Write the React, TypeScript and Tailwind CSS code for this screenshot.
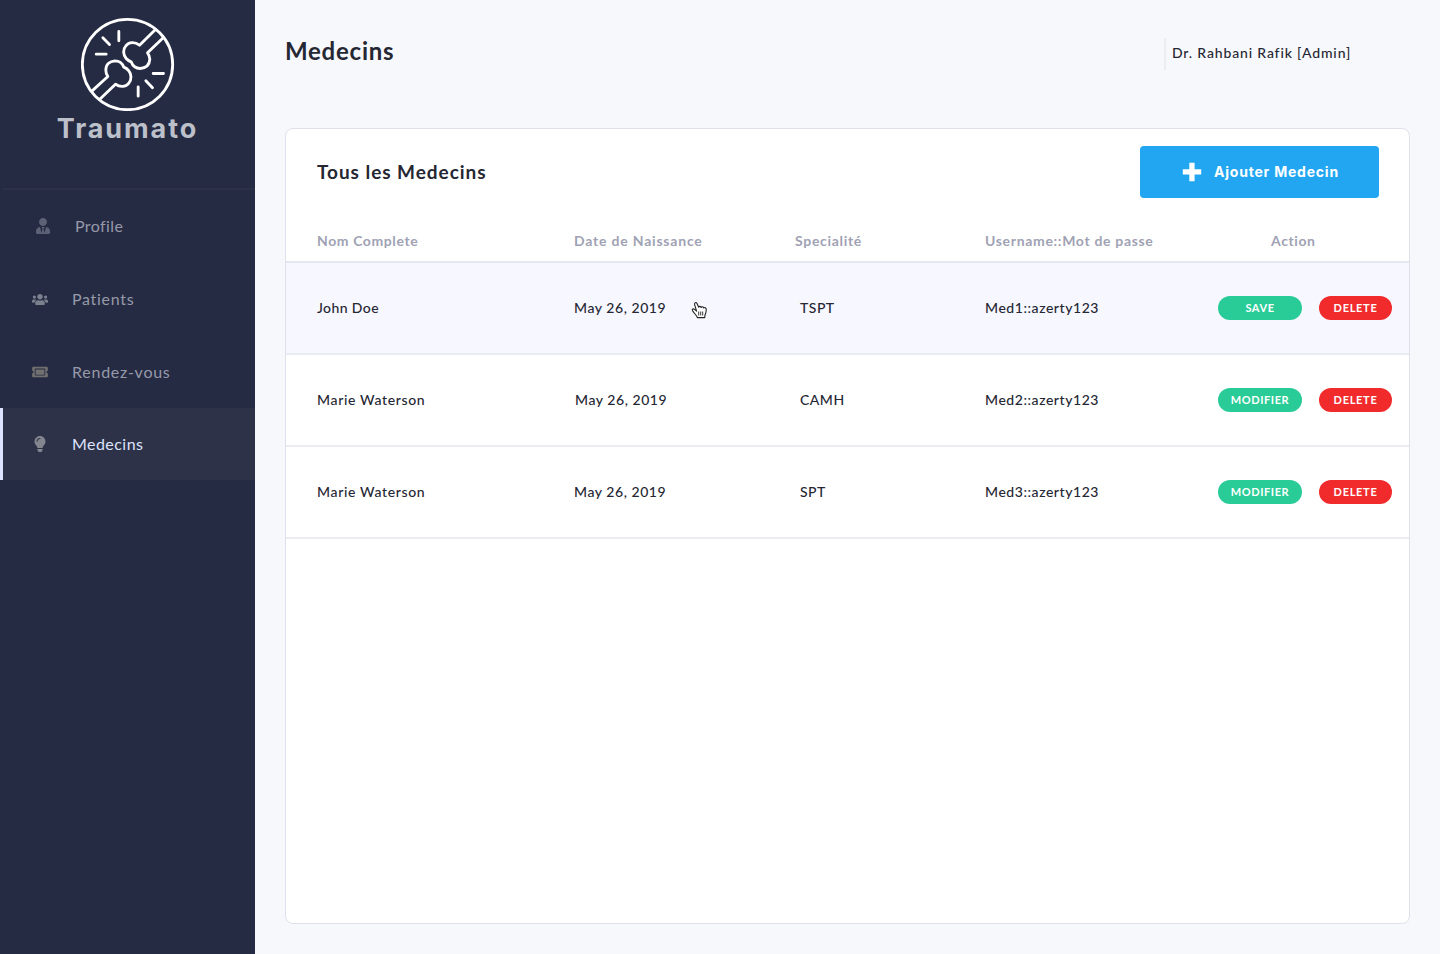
import type { ReactNode } from "react";
import { FaLightbulb, FaTicketAlt, FaUsers, FaUserTie } from "react-icons/fa";

function Logo() {
  return (
    <svg className="h-[94px] w-[94px]" viewBox="92.5 20.5 282 282" fill="none" stroke="#fff" strokeWidth="8.5" strokeLinecap="round" strokeLinejoin="round">
      <circle cx="232" cy="163" r="135.5" />
      <path d="M316 58 268 105C254 94 236 95 227 107C217 118 219 134 228 145Q233 151 243 155C248 169 257 175 270 175C287 174 298 164 299 147Q299 137 292 128L340 82" />
      <path d="M148 268 196 222C209 232 227 231 236 219C245 208 244 192 236 182Q231 175 221 171C216 158 207 152 194 152C178 153 167 163 167 180Q167 190 173 199L125 243" />
      <path d="M206 64v28M158 83l20 20M138 132h30M309 190h31M287 212l20 21M264 230v28" />
    </svg>
  );
}

type NavProps = { icon: ReactNode; label: string; text: string; row: string };

function NavItem({ icon, label, text, row }: NavProps) {
  return (
    <a className={`flex items-center border-l-[3px] ${row}`}>
      <span className="flex w-4 justify-center">{icon}</span>
      <span className={`text-[16px] leading-5 ${text}`}>{label}</span>
    </a>
  );
}

function HandCursor() {
  return (
    <svg className="absolute left-[691px] top-[301px] h-[18px] w-[17px]" viewBox="0 0 17 18" fill="#fff" stroke="#222" strokeWidth="1.1" strokeLinejoin="round">
      <path d="M5.6 10.2 3.6 3.6C3.1 1.6 5.2.8 6 2.5L7.7 6.3C8 5 9.8 5 10.2 6.5C10.7 5.3 12.3 5.6 12.6 7C13.5 6.1 15.2 6.6 15.2 8.2C15.4 11 14.6 12.4 14 14L13.7 16.6H6.4C5.8 14.6 4.2 13.3 2.9 11.6L1.5 9.6C.7 8.2 2.3 7.4 3.5 8.4Z" />
      <path d="M7.7 10.5v4M9.7 10.5v4M11.7 10.5v4" strokeWidth=".9" />
    </svg>
  );
}

const rows = [
  { name: "John Doe", date: "May 26, 2019", spec: "TSPT", user: "Med1::azerty123", action: "SAVE", bg: "bg-[#f7f7ff]", nameCls: "tracking-[0.4px]", dateCls: "" },
  { name: "Marie Waterson", date: "May 26, 2019", spec: "CAMH", user: "Med2::azerty123", action: "MODIFIER", bg: "bg-white", nameCls: "tracking-[0.65px]", dateCls: "pl-px" },
  { name: "Marie Waterson", date: "May 26, 2019", spec: "SPT", user: "Med3::azerty123", action: "MODIFIER", bg: "bg-white", nameCls: "tracking-[0.65px]", dateCls: "" },
];

export default function App() {
  return (
    <div className="relative flex h-[954px] w-[1440px] overflow-hidden bg-[#f7f8fc] font-['Lato',sans-serif] text-[#252733]">
      <aside className="flex w-[255px] shrink-0 flex-col bg-[#262b44]">
        <div className="flex h-[188px] flex-col items-center pt-[17px]">
          <Logo />
          <span className="mt-[2px] whitespace-nowrap font-['Inter',sans-serif] text-[27px] font-bold leading-8 tracking-[1.9px] text-[#bcc0c9]">Traumato</span>
        </div>
        <div className="ml-[3px] h-[2px] bg-[#2c3148]" />
        <nav className="flex flex-col">
          <NavItem icon={<FaUserTie className="h-4 w-[14px] text-[#5d6175]" />} label="Profile" text="ml-6 tracking-[0.4px] text-[#969aa8]" row="h-[73px] border-transparent pb-px pl-8" />
          <NavItem icon={<FaUsers className="h-[13px] w-4 text-[#7c7f8c]" />} label="Patients" text="ml-6 tracking-[0.7px] text-[#969aa8]" row="h-[73px] border-transparent pb-px pl-[29px]" />
          <NavItem icon={<FaTicketAlt className="h-[14px] w-4 text-[#71706f]" />} label="Rendez-vous" text="ml-6 tracking-[0.75px] text-[#969aa8]" row="h-[72px] border-transparent pl-[29px]" />
          <NavItem icon={<FaLightbulb className="h-4 w-3 text-[#83858f]" />} label="Medecins" text="ml-6 tracking-[0.45px] text-[#dde2ff]" row="h-[72px] border-[#dde2ff] bg-[#2d3248] pl-[29px]" />
        </nav>
      </aside>

      <main className="flex flex-1 flex-col px-[30px] pb-[30px]">
        <header className="flex h-32 items-start justify-between">
          <h1 className="pt-[36px] text-[24px] font-bold leading-[30px] tracking-[0.75px]">Medecins</h1>
          <div className="mt-[38px] flex h-8 w-[246px] items-center border-l-2 border-[#ebedf2] pb-[2px] pl-[6px]">
            <span className="whitespace-nowrap text-[14px] font-medium leading-5 tracking-[0.85px]">Dr. Rahbani Rafik [Admin]</span>
          </div>
        </header>

        <section className="flex flex-1 flex-col overflow-hidden rounded-lg border border-[#dfe0eb] bg-white">
          <div className="flex h-[86px] items-center justify-between pl-[31px] pr-[30px]">
            <h2 className="text-[19px] font-bold leading-6 tracking-[0.95px]">Tous les Medecins</h2>
            <button className="flex h-[52px] w-[239px] items-center rounded bg-[#22a6f2] pl-[42px] text-white">
              <svg className="h-5 w-5" viewBox="0 0 20 20" fill="currentColor">
                <path d="M7.3.8h5.3v6.5h6.6v5.3h-6.6v6.6H7.3v-6.6H.8V7.3h6.5Z" />
              </svg>
              <span className="ml-3 whitespace-nowrap font-['Inter',sans-serif] text-[14px] font-bold leading-5 tracking-[0.78px]">Ajouter Medecin</span>
            </button>
          </div>

          <div className="grid h-[48px] grid-cols-[257px_221px_190px_286px_1fr] items-center border-b-2 border-[#e6e7f0] pl-[31px] pt-[5px] text-[14px] font-bold leading-[18px] text-[#9fa2b4]">
            <span className="tracking-[0.6px]">Nom Complete</span>
            <span className="tracking-[0.8px]">Date de Naissance</span>
            <span className="tracking-[0.7px]">Specialité</span>
            <span className="tracking-[0.68px]">Username::Mot de passe</span>
            <span className="tracking-[0.6px]">Action</span>
          </div>

          {rows.map((r) => (
            <div key={r.user} className={`grid h-[92px] grid-cols-[257px_226px_185px_233px_101px_73px] items-center border-b-2 border-[#ebecf3] pl-[31px] text-[14px] font-medium leading-5 ${r.bg}`}>
              <span className={r.nameCls}>{r.name}</span>
              <span className={`tracking-[0.55px] ${r.dateCls}`}>{r.date}</span>
              <span className="tracking-[0.5px]">{r.spec}</span>
              <span className="tracking-[0.55px]">{r.user}</span>
              <button className="flex h-6 w-[84px] items-center justify-center rounded-full bg-[#29cc97] text-[11px] font-bold tracking-[0.6px] text-white">{r.action}</button>
              <button className="flex h-6 w-[73px] items-center justify-center rounded-full bg-[#f12b2c] text-[11px] font-bold tracking-[0.7px] text-white">DELETE</button>
            </div>
          ))}
        </section>
      </main>
      <HandCursor />
    </div>
  );
}
